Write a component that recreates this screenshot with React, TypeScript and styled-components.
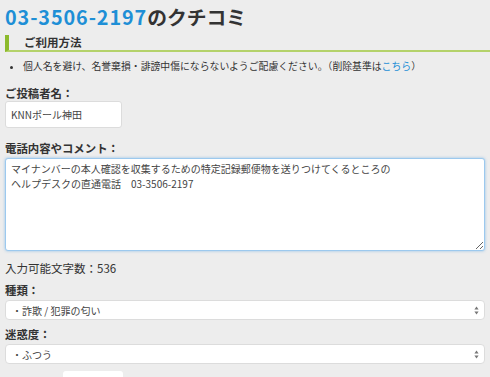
import React, { useEffect, useRef } from "react";
import styled, { createGlobalStyle } from "styled-components";

const Global = createGlobalStyle`
  html, body { margin: 0; padding: 0; background: #ededed; }
  body {
    font-family: "Noto Sans CJK JP", "Noto Sans", sans-serif;
    color: #333;
    overflow: hidden;
  }
`;

const Page = styled.div`
  width: 490px;
  height: 377px;
  padding: 0 5px;
  box-sizing: border-box;
  overflow: hidden;
  background: #ededed;
`;

const Title = styled.h1`
  margin: 0;
  padding-top: 5px;
  font-size: 19.8px;
  line-height: 24px;
  font-weight: 700;
  color: #333;
  white-space: nowrap;
`;

const Num = styled.span`
  color: #1e8fd6;
  letter-spacing: 0.9px;
`;

const SectionHead = styled.div`
  margin: 6px -5px 0 0;
  height: 15px;
  border-left: 4px solid #8cba2c;
  border-bottom: 2px solid #b4d26a;
  padding-left: 15px;
  font-size: 11.5px;
  line-height: 14px;
  font-weight: 700;
  color: #333;
`;

const Notes = styled.ul`
  margin: 7px 0 0;
  padding: 0 0 0 18px;
  font-size: 9.85px;
  line-height: 14px;
  color: #333;
  list-style: disc;
  li::marker { font-size: 9px; }
`;

const Link = styled.a`
  color: #1e8fd6;
  text-decoration: none;
`;

const Label = styled.div<{ $top: number }>`
  margin-top: ${(p) => p.$top}px;
  font-size: 11.4px;
  line-height: 15px;
  font-weight: 700;
  color: #333;
`;

const Counter = styled.div`
  margin-top: 9px;
  font-size: 11.5px;
  line-height: 16px;
  color: #333;
`;

const TextInput = styled.input`
  display: block;
  margin-top: 0;
  width: 117px;
  height: 27px;
  box-sizing: border-box;
  border: 1px solid #dcdcdc;
  border-radius: 3px;
  background: #fff;
  padding: 0 5px;
  font-family: inherit;
  font-size: 10px;
  color: #444;
  outline: none;
`;

const Area = styled.textarea`
  display: block;
  margin-top: 2px;
  width: 480px;
  height: 93px;
  box-sizing: border-box;
  border: 1px solid #9cc9ee;
  border-radius: 3px;
  box-shadow: 0 0 3px rgba(110, 175, 230, 0.7);
  background: #fff;
  padding: 3px 5px;
  font-family: inherit;
  font-size: 10px;
  line-height: 14.5px;
  color: #444;
  outline: none;
  resize: both;
  caret-color: #444;
`;

const SelectBox = styled.div`
  margin-top: 2px;
  width: 480px;
  height: 20px;
  box-sizing: border-box;
  border: 1px solid #dcdcdc;
  border-radius: 4px;
  background: #fff;
  display: flex;
  align-items: center;
  justify-content: space-between;
  padding: 0 5px 0 6px;
  font-size: 10px;
  color: #444;
`;

const Arrows = styled.svg`
  width: 5px;
  height: 9px;
  flex: none;
`;

const Submit = styled.div`
  margin: 7px 0 0 58px;
  width: 60px;
  height: 20px;
  background: #fff;
  border-radius: 3px;
`;

function Select({ value }: { value: string }) {
  return (
    <SelectBox>
      <span>{value}</span>
      <Arrows viewBox="0 0 5 9">
        <path d="M2.5 0.5 L4.6 3.6 L0.4 3.6 Z" fill="#777" />
        <path d="M2.5 8.5 L4.6 5.4 L0.4 5.4 Z" fill="#777" />
      </Arrows>
    </SelectBox>
  );
}

export default function App() {
  const ref = useRef<HTMLTextAreaElement>(null);
  const text =
    "マイナンバーの本人確認を収集するための特定記録郵便物を送りつけてくるところの\nヘルプデスクの直通電話　03-3506-2197\n";
  useEffect(() => {
    const el = ref.current;
    if (el) {
      el.focus();
      el.setSelectionRange(text.length, text.length);
    }
  }, []);
  return (
    <Page>
      <Global />
      <Title>
        <Num>03-3506-2197</Num>のクチコミ
      </Title>
      <SectionHead>ご利用方法</SectionHead>
      <Notes>
        <li>
          個人名を避け、名誉棄損・誹謗中傷にならないようご配慮ください。（削除基準は
          <Link href="#">こちら</Link>）
        </li>
      </Notes>
      <Label $top={13}>ご投稿者名：</Label>
      <TextInput defaultValue="KNNポール神田" />
      <Label $top={13}>電話内容やコメント：</Label>
      <Area ref={ref} defaultValue={text} />
      <Counter>入力可能文字数：536</Counter>
      <Label $top={7}>種類：</Label>
      <Select value="・詐欺 / 犯罪の匂い" />
      <Label $top={7}>迷惑度：</Label>
      <Select value="・ふつう" />
      <Submit />
    </Page>
  );
}
